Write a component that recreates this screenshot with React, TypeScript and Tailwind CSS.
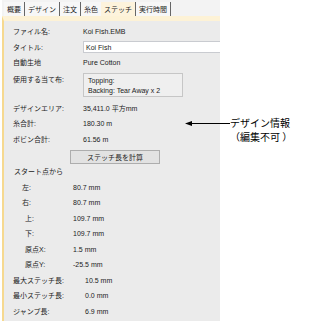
import React from "react";

const tabs = [
  { label: "概要", active: false, sep: true },
  { label: "デザイン", active: false, sep: true },
  { label: "注文", active: false, sep: true },
  { label: "糸色", active: false, sep: false },
  { label: "ステッチ", active: true, sep: true },
  { label: "実行時間", active: false, sep: true },
];

function Row({
  label,
  value,
  labelW = "w-[70px]",
  indent = "pl-[9px]",
}: {
  label: string;
  value: string;
  labelW?: string;
  indent?: string;
}) {
  return (
    <div className={`flex h-[15.5px] items-center ${indent}`}>
      <div className={`${labelW} shrink-0`}>{label}</div>
      <div>{value}</div>
    </div>
  );
}

export default function App() {
  return (
    <div className="relative w-[328px] h-[335px] bg-white text-[#222] font-['Liberation_Sans','Noto_Sans_CJK_JP',sans-serif] text-[7px] leading-none">
      <div className="ml-[2px] w-[218px] h-[321px] bg-[#ebebeb] flex flex-col">
        {/* tab strip */}
        <div className="h-[16px] bg-[#f3f3f3] flex items-stretch pl-[2px] pt-[2px]">
          {tabs.map((t) => (
            <div
              key={t.label}
              className={`flex items-center px-[3px] ${
                t.active ? "bg-[#fdf3dc]" : "bg-[#f7f7f7]"
              } ${t.sep ? "border-r border-r-[#666]" : ""}`}
            >
              {t.label}
            </div>
          ))}
        </div>

        {/* page body */}
        <div className="flex-1 flex flex-col border-l-2 border-l-[#f6d98f] border-t-[5px] border-t-[#fdf2d6] pt-[3px]">
          <Row label="ファイル名:" value="Koi Fish.EMB" />
          <div className="flex h-[15.5px] items-center pl-[9px]">
            <div className="w-[70px] shrink-0">タイトル:</div>
            <div className="flex-1 h-[12px] bg-white border border-[#c9cbd0] border-r-0 flex items-center pl-[2px]">
              Koi Fish
            </div>
          </div>
          <Row label="自動生地" value="Pure Cotton" />
          <div className="flex pl-[9px] mt-[2px]">
            <div className="w-[70px] shrink-0 pt-[3px]">使用する当て布:</div>
            <div className="w-[100px] h-[24px] bg-[#efefef] border border-[#c6c6c6] pl-[4px] pt-[3px] flex flex-col gap-[3px]">
              <div>Topping:</div>
              <div>Backing: Tear Away x 2</div>
            </div>
          </div>
          <div className="h-[4px]" />
          <Row label="デザインエリア:" value="35,411.0 平方mm" />
          <Row label="糸合計:" value="180.30 m" />
          <Row label="ボビン合計:" value="61.56 m" />
          <div className="pl-[66px] mt-[3px]">
            <div className="w-[90px] h-[14px] bg-[#e2e2e2] border border-[#adadad] flex items-center justify-center">
              ステッチ長を計算
            </div>
          </div>
          <Row label="スタート点から" value="" indent="pl-[10px]" />
          <Row label="左:" value="80.7 mm" labelW="w-[51px]" indent="pl-[18px]" />
          <Row label="右:" value="80.7 mm" labelW="w-[51px]" indent="pl-[18px]" />
          <Row label="上:" value="109.7 mm" labelW="w-[48px]" indent="pl-[21px]" />
          <Row label="下:" value="109.7 mm" labelW="w-[48px]" indent="pl-[21px]" />
          <Row label="原点X:" value="1.5 mm" labelW="w-[48px]" indent="pl-[21px]" />
          <Row label="原点Y:" value="-25.5 mm" labelW="w-[48px]" indent="pl-[21px]" />
          <Row label="最大ステッチ長:" value="10.5 mm" labelW="w-[72px]" />
          <Row label="最小ステッチ長:" value="0.0 mm" labelW="w-[72px]" />
          <Row label="ジャンプ長:" value="6.9 mm" labelW="w-[72px]" />
        </div>
      </div>

      {/* callout */}
      <div className="absolute left-[185px] top-[116px] flex items-start">
        <svg width="45" height="14" viewBox="0 0 45 14">
          <path d="M5 7.5 H45" stroke="#000" strokeWidth="1" />
          <path d="M0 7.5 L7 5 L7 10 Z" fill="#000" />
        </svg>
        <div className="text-[10px] leading-[14px] text-black font-['Noto_Sans_CJK_JP',sans-serif]">
          <div>デザイン情報</div>
          <div>（編集不可 ）</div>
        </div>
      </div>
    </div>
  );
}
